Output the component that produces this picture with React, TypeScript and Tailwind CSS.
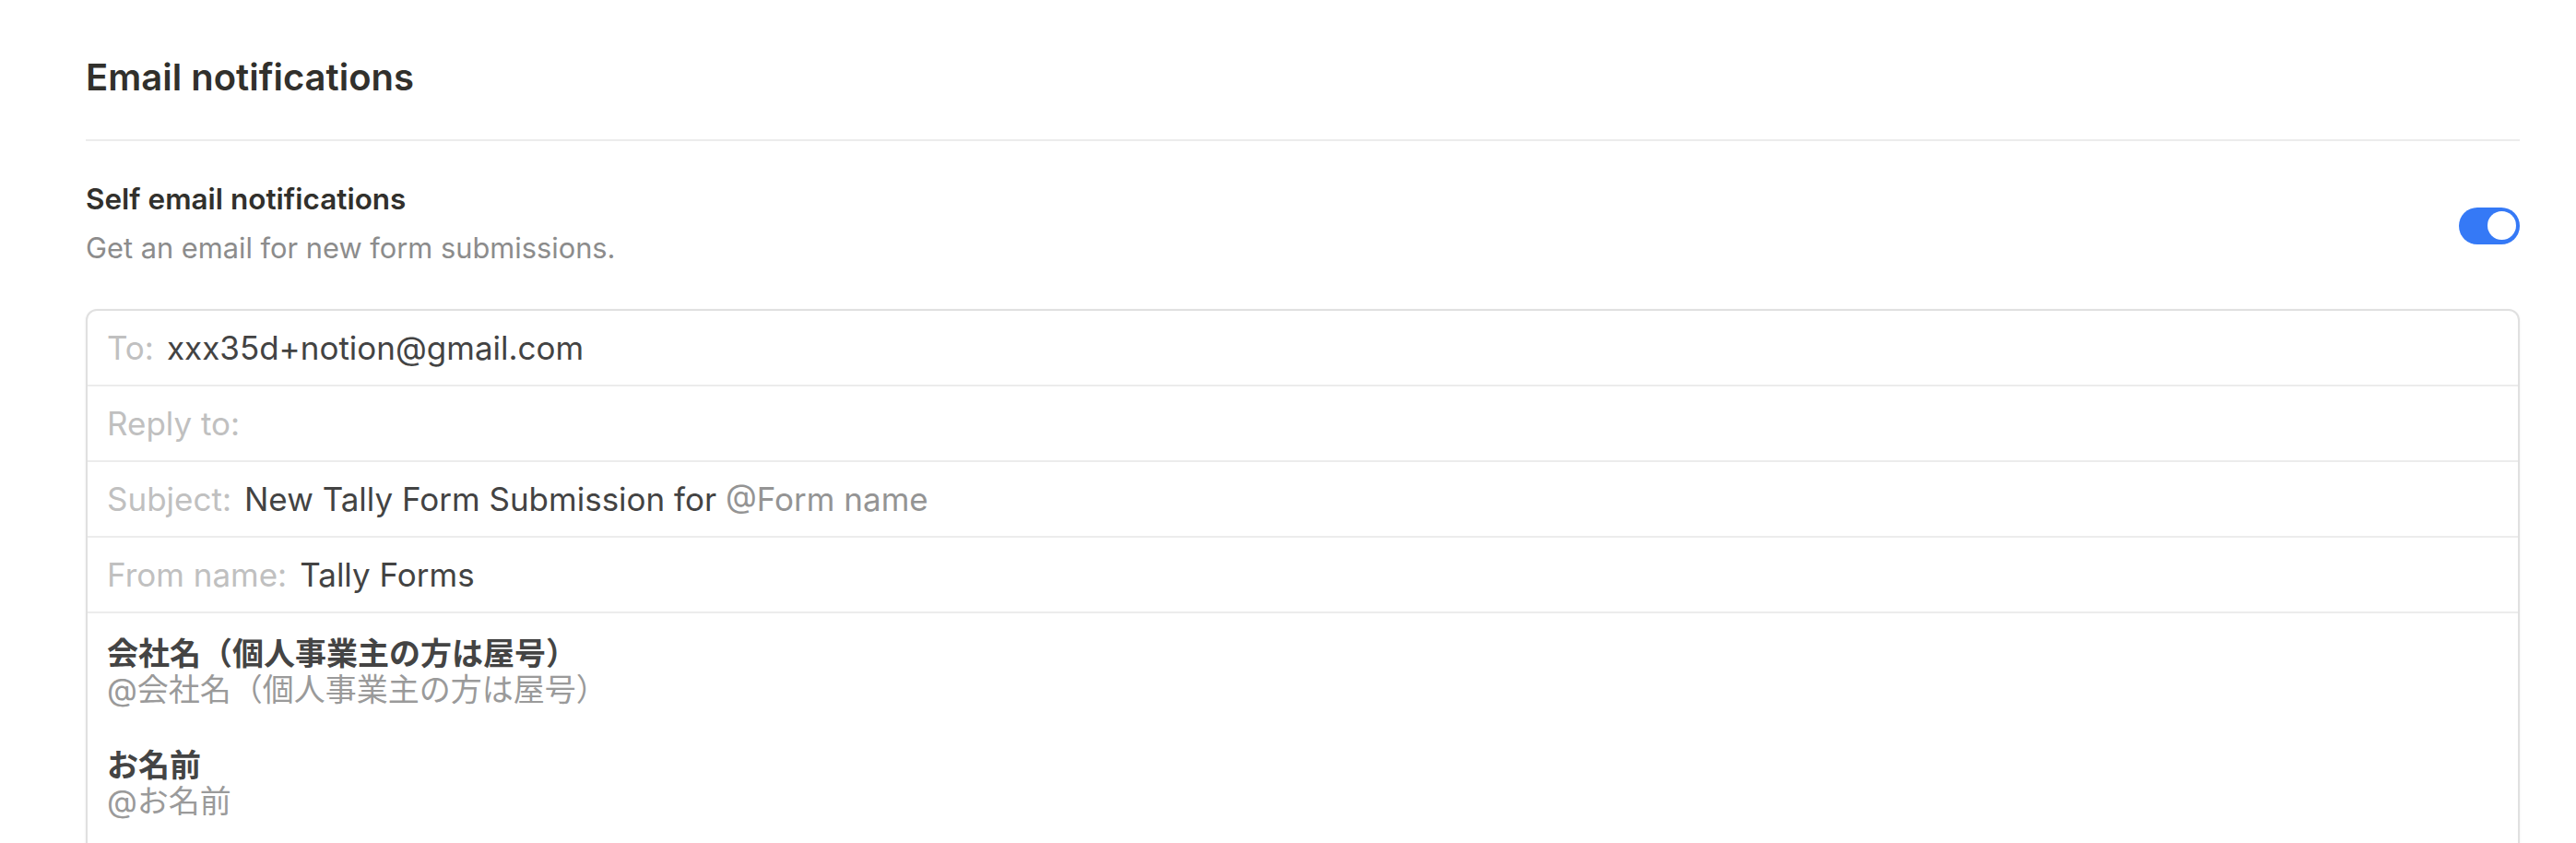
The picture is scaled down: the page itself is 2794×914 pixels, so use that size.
import React from "react";

const font = "font-['Inter','Noto_Sans_CJK_JP',sans-serif]";

function Row({ label, children }: { label: string; children?: React.ReactNode }) {
  return (
    <div className="flex h-[82px] items-center gap-[14px] border-b-2 border-[#ececec] px-[21px] text-[35px]">
      <span className="text-[#c0c0c0]">{label}</span>
      {children}
    </div>
  );
}

export default function App() {
  return (
    <div className={`h-[914px] w-[2794px] overflow-hidden bg-white ${font} text-[#37352f]`}>
      <div className="ml-[93px] w-[2640px] pt-[58px]">
        <h2 className="text-[40px] font-semibold leading-[52px] text-[#31302c]">Email notifications</h2>
        <div className="mt-[41px] h-[2px] bg-[#ececec]" />
        <div className="mt-[43px] flex items-center justify-between">
          <div>
            <div className="text-[31.5px] font-semibold leading-[40px] text-[#31302c]">Self email notifications</div>
            <div className="mt-[13px] text-[30.8px] leading-[40px] text-[#8c8c8c]">Get an email for new form submissions.</div>
          </div>
          <div className="mt-[4px] flex h-[40px] w-[66px] items-center justify-end rounded-full bg-[#3579f6] pr-[4px]">
            <div className="h-[31px] w-[31px] rounded-full bg-white" />
          </div>
        </div>
        <div className="mt-[46px] rounded-[12px] border-2 border-[#e0e0e0] shadow-[0_1px_3px_rgba(0,0,0,0.06)]">
          <Row label="To:">
            <span className="text-[#434343]">xxx35d+notion@gmail.com</span>
          </Row>
          <Row label="Reply to:" />
          <Row label="Subject:">
            <span className="text-[#434343]">
              New Tally Form Submission for <span className="text-[#949494]">@Form name</span>
            </span>
          </Row>
          <Row label="From name:">
            <span className="text-[#434343]">Tally Forms</span>
          </Row>
          <div className="px-[21px] pt-[24px] text-[34px] leading-[39px]">
            <div className="font-bold text-[#444444]">会社名（個人事業主の方は屋号）</div>
            <div className="text-[#9a9a9a]">@会社名（個人事業主の方は屋号）</div>
            <div className="h-[43px]" />
            <div className="font-bold text-[#444444]">お名前</div>
            <div className="text-[#9a9a9a]">@お名前</div>
            <div className="h-[40px]" />
          </div>
        </div>
      </div>
    </div>
  );
}
